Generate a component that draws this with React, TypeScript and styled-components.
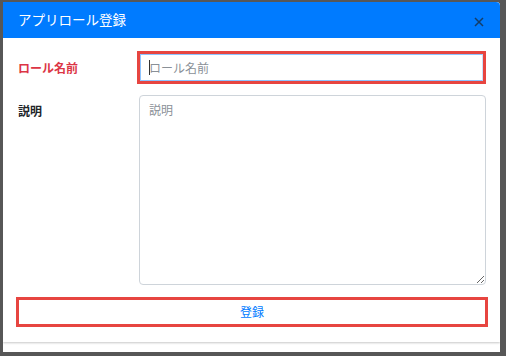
import React from "react";
import styled, { createGlobalStyle } from "styled-components";

const Global = createGlobalStyle`
  html, body { margin: 0; padding: 0; }
  body {
    background: #575757;
    font-family: "Noto Sans CJK JP", "Noto Sans", sans-serif;
  }
  * { box-sizing: border-box; }
`;

const Page = styled.div`
  width: 506px;
  height: 356px;
  padding: 2px 6px 4px 3px;
`;

const Modal = styled.div`
  width: 497px;
  height: 350px;
  background: #ffffff;
  border-radius: 0 4px 0 0;
  overflow: hidden;
`;

const Card = styled.div`
  display: flex;
  flex-direction: column;
  height: 340px;
  background: #ffffff;
  box-shadow: 0 1px 2px rgba(0, 0, 0, 0.22);
`;

const Header = styled.div`
  height: 36px;
  flex: 0 0 36px;
  background: #007bff;
  display: flex;
  align-items: center;
  justify-content: space-between;
  padding: 0 16px 0 15px;
`;

const Title = styled.h5`
  margin: 0;
  color: #ffffff;
  font-size: 13.5px;
  font-weight: 400;
  line-height: 1;
`;

const Close = styled.button`
  border: 0;
  background: transparent;
  padding: 0;
  margin-top: 4px;
  width: 10px;
  height: 10px;
  display: flex;
  align-items: center;
  justify-content: center;
  color: #143d68;
  cursor: pointer;
`;

const Body = styled.div`
  display: flex;
  flex-direction: column;
  padding: 0 12px 15px 13px;
`;

const Row = styled.div<{ $top: number }>`
  display: flex;
  align-items: flex-start;
  margin-top: ${(p) => p.$top}px;
`;

const Label = styled.label<{ $width: number; $required?: boolean; $pt: number }>`
  flex: 0 0 ${(p) => p.$width}px;
  padding-left: 2px;
  padding-top: ${(p) => p.$pt}px;
  font-size: 12px;
  font-weight: 700;
  line-height: 16px;
  color: ${(p) => (p.$required ? "#dc3545" : "#212529")};
`;

const Highlight = styled.div`
  flex: 1;
  margin-right: 2px;
  height: 33px;
  border: 3px solid #e74540;
  position: relative;
`;

const Input = styled.input`
  display: block;
  width: 100%;
  height: 100%;
  border: 1px solid #8ec4ff;
  border-right-color: #c9e1fb;
  border-radius: 0;
  padding: 0 8px;
  font-family: inherit;
  font-size: 12px;
  color: #495057;
  outline: none;
  &::placeholder { color: #8a9097; }
`;

const Caret = styled.span`
  position: absolute;
  left: 9px;
  top: 6px;
  width: 1px;
  height: 15px;
  background: #333;
`;

const TextArea = styled.textarea`
  flex: 1;
  margin-right: 2px;
  height: 190px;
  border: 1px solid #ced4da;
  border-radius: 4px;
  padding: 6px 9px;
  font-family: inherit;
  font-size: 12px;
  line-height: 16px;
  color: #495057;
  outline: none;
  &::placeholder { color: #8a9097; }
`;

const Submit = styled.button`
  margin-top: 12px;
  height: 30px;
  border: 3px solid #e74540;
  background: #ffffff;
  color: #007bff;
  font-family: inherit;
  font-size: 12px;
  line-height: 1;
  padding: 0;
  cursor: pointer;
`;

export default function App() {
  return (
    <>
      <Global />
      <Page>
        <Modal>
          <Card>
            <Header>
              <Title>アプリロール登録</Title>
              <Close aria-label="閉じる">
                <svg width="10" height="10" viewBox="0 0 10 10">
                  <path d="M1 1 L9 9 M9 1 L1 9" stroke="currentColor" strokeWidth="1.5" />
                </svg>
              </Close>
            </Header>
            <Body>
              <Row $top={13}>
                <Label $width={121} $required $pt={9}>ロール名前</Label>
                <Highlight>
                  <Input placeholder="ロール名前" />
                  <Caret />
                </Highlight>
              </Row>
              <Row $top={11}>
                <Label $width={123} $pt={8}>説明</Label>
                <TextArea placeholder="説明" />
              </Row>
              <Submit>登録</Submit>
            </Body>
          </Card>
        </Modal>
      </Page>
    </>
  );
}
